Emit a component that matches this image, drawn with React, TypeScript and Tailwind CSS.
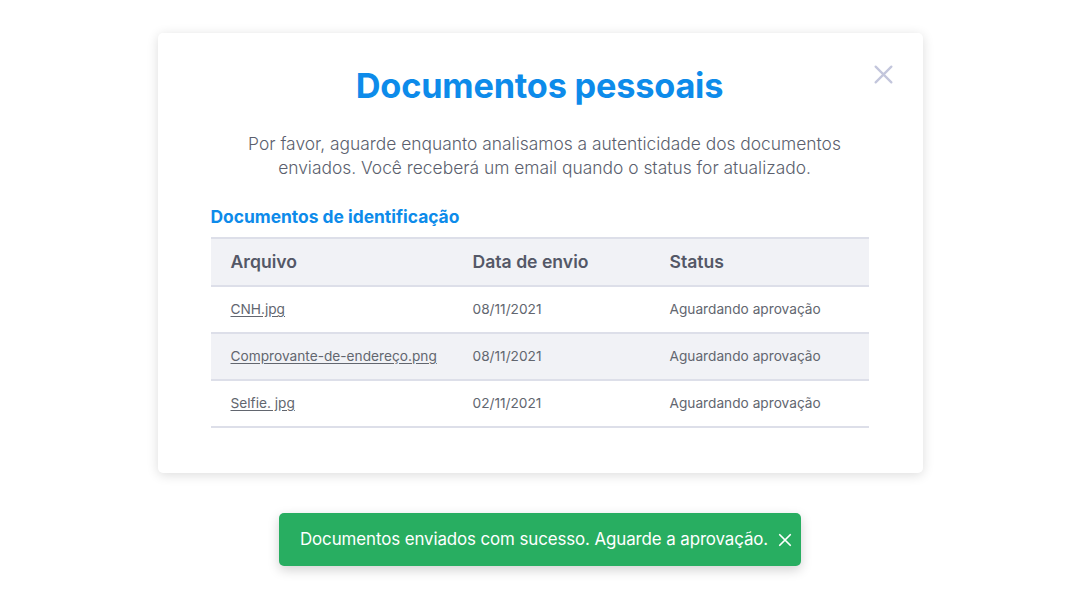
import React from 'react';

interface DocRow {
  file: string;
  sentAt: string;
  status: string;
}

const docs: DocRow[] = [
  { file: 'CNH.jpg', sentAt: '08/11/2021', status: 'Aguardando aprovação' },
  { file: 'Comprovante-de-endereço.png', sentAt: '08/11/2021', status: 'Aguardando aprovação' },
  { file: 'Selfie. jpg', sentAt: '02/11/2021', status: 'Aguardando aprovação' },
];

const font = { fontFamily: 'Inter, "Noto Sans", sans-serif' };

/** Ícone de fechar (X) */
const CloseIcon = ({ className, stroke }: { className: string; stroke: number }) => (
  <svg viewBox="0 0 24 24" className={className} fill="none" stroke="currentColor" strokeWidth={stroke} strokeLinecap="round">
    <path d="M3 3L21 21M21 3L3 21" />
  </svg>
);

const App = () => {
  return (
    <div className="w-full h-[600px] bg-white flex flex-col items-center pt-[33px]" style={font}>
      {/* modal */}
      <div className="relative w-[765px] h-[440px] bg-white rounded-[5px] shadow-[0_2px_12px_rgba(0,0,0,0.14)] pl-[53px] pr-[54px] pt-[29px]">
        <button className="absolute right-[29px] top-[31px] block text-[#c3c6dc]">
          <CloseIcon className="block w-[21px] h-[21px]" stroke={2.6} />
        </button>

        <h1 className="text-center text-[34.3px] leading-[48px] font-bold text-[#0d8bea] tracking-[-0.2px]">
          Documentos pessoais
        </h1>
        <p className="mt-[22px] ml-[14px] w-[640px] text-center text-[17.4px] leading-[24px] font-light text-[#5b5f6e]">
          Por favor, aguarde enquanto analisamos a autenticidade dos documentos enviados. Você receberá um email quando o status for atualizado.
        </p>

        <h2 className="mt-[25px] text-[17.4px] leading-[24px] font-bold text-[#0d8bea]">
          Documentos de identificação
        </h2>

        {/* tabela */}
        <div className="mt-[8px] border-t-2 border-[#dddfe9]">
          <div className="grid grid-cols-[242px_197px_1fr] h-[48px] items-center bg-[#f1f2f6] border-b-2 border-[#dddfe9] text-[17.6px] font-semibold text-[#545867]">
            <span className="pl-5">Arquivo</span>
            <span className="pl-5">Data de envio</span>
            <span className="pl-5">Status</span>
          </div>
          {docs.map((doc, i) => (
            <div
              key={doc.file}
              className={`grid grid-cols-[242px_197px_1fr] h-[47px] items-center border-b-2 border-[#dddfe9] text-[13.7px] text-[#62666f] ${
                i % 2 === 1 ? 'bg-[#f1f2f6]' : 'bg-white'
              }`}
            >
              <a href="#" className="pl-5 underline underline-offset-2">{doc.file}</a>
              <span className="pl-5">{doc.sentAt}</span>
              <span className="pl-5">{doc.status}</span>
            </div>
          ))}
        </div>
      </div>

      {/* toast */}
      <div className="mt-[40px] w-[522px] h-[53px] bg-[#28ae61] rounded-[5px] shadow-[0_4px_12px_rgba(0,0,0,0.18)] flex items-center pl-[21px] pr-[9px] text-white">
        <span className="text-[16.9px] tracking-[-0.1px]">Documentos enviados com sucesso. Aguarde a aprovação.</span>
        <CloseIcon className="ml-auto w-[14px] h-[14px]" stroke={3} />
      </div>
    </div>
  );
};

export default App;
